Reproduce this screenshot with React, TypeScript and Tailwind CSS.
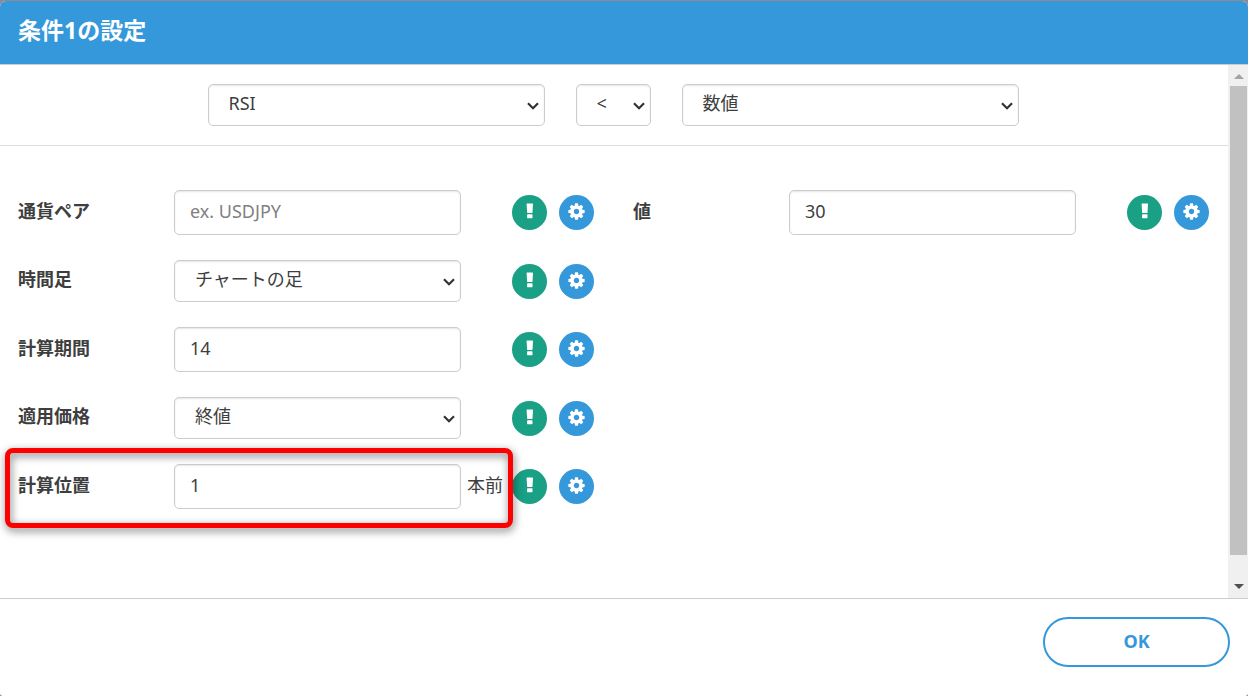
import { useState } from "react";
import type { ReactNode } from "react";

interface Option {
  value: string;
  label: string;
}

interface SelectBoxProps {
  id: string;
  options: Option[];
  label?: string;
}

const CONTROL =
  "w-full rounded-[5px] border border-[#cccccc] bg-white text-[#3e3e3e] shadow-[inset_0_1px_2px_rgba(0,0,0,0.1)] focus:outline-none focus:border-[#3598db]";

const INDICATORS: Option[] = [
  { value: "rsi", label: "RSI" },
  { value: "macd", label: "MACD" },
];
const OPERATORS: Option[] = [
  { value: "lt", label: "<" },
  { value: "gt", label: ">" },
];
const TARGETS: Option[] = [{ value: "number", label: "数値" }];
const TIMEFRAMES: Option[] = [{ value: "chart", label: "チャートの足" }];
const PRICES: Option[] = [
  { value: "close", label: "終値" },
  { value: "open", label: "始値" },
];

function SelectBox({ id, options, label }: SelectBoxProps) {
  const [value, setValue] = useState(options[0].value);

  return (
    <div className="relative w-full">
      <select
        id={id}
        aria-label={label}
        value={value}
        onChange={(e) => setValue(e.target.value)}
        className={`${CONTROL} h-[42px] appearance-none pb-1 pl-5 pr-6`}
      >
        {options.map((o) => (
          <option key={o.value} value={o.value}>
            {o.label}
          </option>
        ))}
      </select>
      <svg
        viewBox="0 0 12 8"
        className="pointer-events-none absolute right-1.5 top-[18px] h-2 w-3"
        fill="none"
        stroke="#333333"
        strokeWidth="2.2"
      >
        <path d="M1 1.2 6 6.2 11 1.2" />
      </svg>
    </div>
  );
}

interface TextBoxProps {
  id: string;
  initial?: string;
  placeholder?: string;
}

function TextBox({ id, initial = "", placeholder }: TextBoxProps) {
  const [value, setValue] = useState(initial);

  return (
    <input
      id={id}
      type="text"
      value={value}
      placeholder={placeholder}
      onChange={(e) => setValue(e.target.value)}
      className={`${CONTROL} h-[45px] px-[15px] pb-1 placeholder:text-[#808080]`}
    />
  );
}

function RowButtons() {
  return (
    <div className="flex gap-3">
      <button
        type="button"
        aria-label="説明"
        className="flex h-[35px] w-[35px] items-center justify-center rounded-full bg-[#19a085] hover:bg-[#15866f]"
      >
        <svg viewBox="0 0 19 19" className="mb-0.5 h-[19px] w-[19px]" fill="white">
          <path d="M7 1.5h5.6q.4 0 .4.5l-.5 8.4q0 .6-.6.6H7.7q-.6 0-.6-.6L6.6 2q0-.5.4-.5zM7.5 12.3h4.6q.4 0 .4.4v3.1q0 .4-.4.4H7.5q-.4 0-.4-.4v-3.1q0-.4.4-.4z" />
        </svg>
      </button>
      <button
        type="button"
        aria-label="設定"
        className="flex h-[35px] w-[35px] items-center justify-center rounded-full bg-[#3598db] hover:bg-[#2a80b9]"
      >
        <svg viewBox="0 0 1792 1792" className="mb-0.5 h-[19px] w-[19px]" fill="white">
          <path d="M1152 896q0-106-75-181t-181-75-181 75-75 181 75 181 181 75 181-75 75-181zm512-109v222q0 12-8 23t-20 13l-185 28q-19 54-39 91 35 50 107 138 10 12 10 25t-9 23q-27 37-99 108t-94 71q-12 0-26-9l-138-108q-44 23-91 38-16 136-29 186-7 28-36 28h-222q-14 0-24.5-8.5t-11.5-21.5l-28-184q-49-16-90-37l-141 107q-10 9-25 9-14 0-25-11-126-114-165-168-7-10-7-23 0-12 8-23 15-21 51-66.5t54-70.5q-27-50-41-99l-183-27q-13-2-21-12.5t-8-23.5v-222q0-12 8-23t19-13l186-28q14-46 39-92-40-57-107-138-10-12-10-24 0-10 9-23 26-36 98.5-107.5t94.5-71.5q13 0 26 10l138 107q44-23 91-38 16-136 29-186 7-28 36-28h222q14 0 24.5 8.5t11.5 21.5l28 184q49 16 90 37l142-107q9-9 24-9 13 0 25 10 129 119 165 170 7 8 7 22 0 12-8 23-15 21-51 66.5t-54 70.5q26 50 41 98l183 28q13 2 21 12.5t8 23.5z" />
        </svg>
      </button>
    </div>
  );
}

interface FieldProps {
  id: string;
  label: string;
  suffix?: string;
  highlighted?: boolean;
  children: ReactNode;
}

function Field({ id, label, suffix, highlighted, children }: FieldProps) {
  return (
    <div className="relative grid min-h-11 grid-cols-[156px_minmax(0,1fr)_51px_auto] items-center">
      <label htmlFor={id} className="pb-1 font-bold">
        {label}
      </label>
      {children}
      <span className="whitespace-nowrap pb-1 pl-1.5">{suffix}</span>
      <RowButtons />
      {highlighted && (
        <div className="pointer-events-none absolute -bottom-[19px] -left-[13px] -top-4 right-[81px] rounded-lg border-[5px] border-[#ff0000] drop-shadow-[1px_3px_4px_rgba(0,0,0,0.55)]" />
      )}
    </div>
  );
}

// Always-visible scrollbar beside the dialog body
function ScrollRail() {
  return (
    <div aria-hidden="true" className="flex w-5 shrink-0 flex-col bg-[#f0f0f0] pl-0.5 pr-px">
      <div className="flex h-[21px] items-center justify-center">
        <svg viewBox="0 0 10 5" className="mt-0.5 h-[5px] w-2.5" fill="#a3a3a3">
          <path d="M0 5 5 0l5 5z" />
        </svg>
      </div>
      <div className="h-[88%] bg-[#c1c1c1]" />
      <div className="mt-auto flex h-6 items-center justify-center">
        <svg viewBox="0 0 10 5" className="h-[5px] w-2.5" fill="#505050">
          <path d="M0 0h10L5 5z" />
        </svg>
      </div>
    </div>
  );
}

export default function App() {
  return (
    <div className="flex h-screen flex-col bg-[#8b8b8b] pt-px font-['Noto_Sans','Noto_Sans_CJK_JP',sans-serif] text-[18px] leading-[26px] text-[#3e3e3e]">
      <div
        role="dialog"
        aria-labelledby="dialog-title"
        className="flex min-h-0 flex-1 flex-col overflow-hidden rounded-b-[3px] rounded-t-md bg-white"
      >
        <header className="flex h-16 shrink-0 items-center border-b border-[#cccccc] bg-[#3598db] px-[18px] pb-1.5">
          <h1 id="dialog-title" className="text-[23px] font-bold text-white">
            条件1の設定
          </h1>
        </header>

        <div className="flex min-h-0 flex-1">
          <div className="min-w-0 flex-1 overflow-hidden">
            <div className="flex justify-center border-b border-[#dddddd] py-[19px] pr-0.5">
              <div className="grid w-[811px] max-w-full grid-cols-[1fr_75px_1fr] gap-[31px]">
                <SelectBox id="indicator" label="指標" options={INDICATORS} />
                <SelectBox id="operator" label="比較" options={OPERATORS} />
                <SelectBox id="target" label="比較対象" options={TARGETS} />
              </div>
            </div>

            <div className="grid grid-cols-2 pt-11">
              <div className="flex flex-col gap-6 pl-[18px] pr-5">
                <Field id="pair" label="通貨ペア">
                  <TextBox id="pair" placeholder="ex. USDJPY" />
                </Field>
                <Field id="timeframe" label="時間足">
                  <SelectBox id="timeframe" options={TIMEFRAMES} />
                </Field>
                <Field id="period" label="計算期間">
                  <TextBox id="period" initial="14" />
                </Field>
                <Field id="price" label="適用価格">
                  <SelectBox id="price" options={PRICES} />
                </Field>
                <Field id="shift" label="計算位置" suffix="本前" highlighted>
                  <TextBox id="shift" initial="1" />
                </Field>
              </div>
              <div className="flex flex-col gap-6 px-[19px]">
                <Field id="value" label="値">
                  <TextBox id="value" initial="30" />
                </Field>
              </div>
            </div>
          </div>
          <ScrollRail />
        </div>

        <footer className="flex h-[98px] shrink-0 items-start justify-end border-t border-[#cccccc] px-[18px] pt-[18px]">
          <button
            type="button"
            className="h-[50px] w-[187px] rounded-full border-2 border-[#3598db] bg-white pb-0.5 font-bold text-[#3598db] hover:bg-[#3598db] hover:text-white"
          >
            OK
          </button>
        </footer>
      </div>
    </div>
  );
}
